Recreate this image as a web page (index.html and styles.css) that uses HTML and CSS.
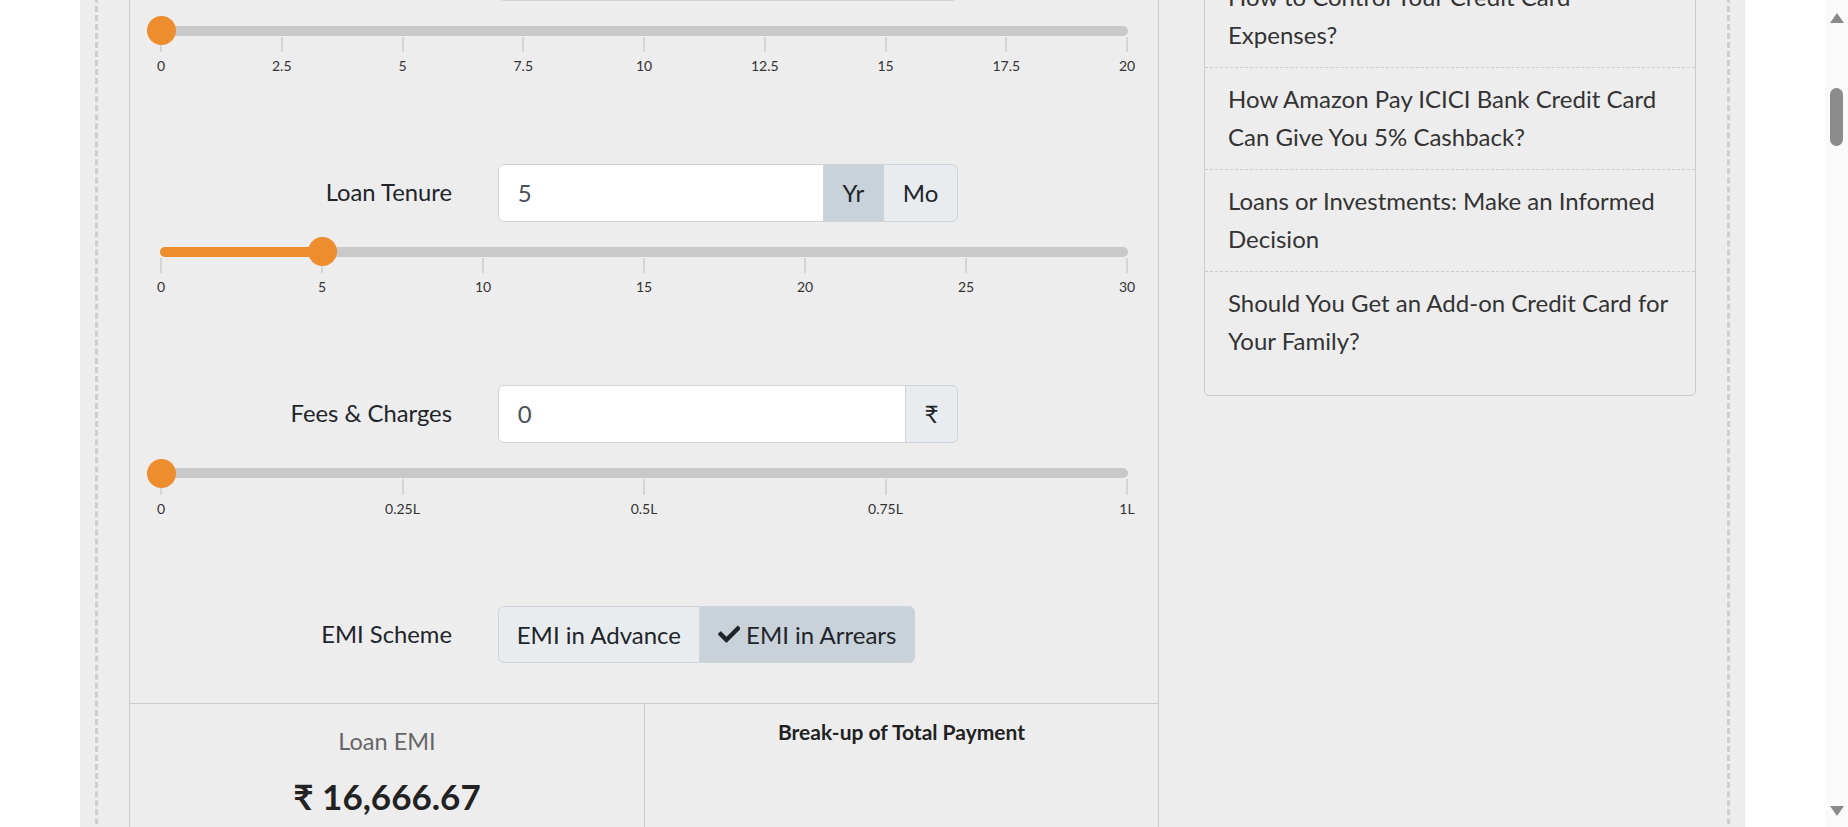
FILE: index.html
```html
<!DOCTYPE html>
<html lang="en">
<head>
<meta charset="utf-8">
<title>Home Loan EMI Calculator</title>
<link rel="stylesheet" href="styles.css">
</head>
<body>
<div class="viewport">
  <div class="page">
    <div class="frame">
      <main class="calc">
        <div class="form">

          <section class="form-row">
            <div class="field">
              <label class="field-label">Home Loan Amount</label>
              <div class="input-group">
                <span class="input">10,00,000</span>
                <span class="addon">₹</span>
              </div>
            </div>
            <div class="slider">
              <div class="track">
                <div class="rail">
                  <div class="fill" style="width:5%"></div>
                  <div class="thumb" style="left:5%"></div>
                </div>
              </div>
              <div class="ticks">
                <div class="tick"><span class="mark"></span><span class="tick-label">0</span></div>
                <div class="tick"><span class="mark"></span><span class="tick-label">25L</span></div>
                <div class="tick"><span class="mark"></span><span class="tick-label">50L</span></div>
                <div class="tick"><span class="mark"></span><span class="tick-label">75L</span></div>
                <div class="tick"><span class="mark"></span><span class="tick-label">100L</span></div>
                <div class="tick"><span class="mark"></span><span class="tick-label">125L</span></div>
                <div class="tick"><span class="mark"></span><span class="tick-label">150L</span></div>
                <div class="tick"><span class="mark"></span><span class="tick-label">175L</span></div>
                <div class="tick"><span class="mark"></span><span class="tick-label">200L</span></div>
              </div>
            </div>
          </section>

          <section class="form-row">
            <div class="field">
              <label class="field-label">Interest Rate</label>
              <div class="input-group">
                <span class="input">0</span>
                <span class="addon">%</span>
              </div>
            </div>
            <div class="slider">
              <div class="track">
                <div class="rail">
                  <div class="fill" style="width:0%"></div>
                  <div class="thumb" style="left:0%"></div>
                </div>
              </div>
              <div class="ticks">
                <div class="tick"><span class="mark"></span><span class="tick-label">0</span></div>
                <div class="tick"><span class="mark"></span><span class="tick-label">2.5</span></div>
                <div class="tick"><span class="mark"></span><span class="tick-label">5</span></div>
                <div class="tick"><span class="mark"></span><span class="tick-label">7.5</span></div>
                <div class="tick"><span class="mark"></span><span class="tick-label">10</span></div>
                <div class="tick"><span class="mark"></span><span class="tick-label">12.5</span></div>
                <div class="tick"><span class="mark"></span><span class="tick-label">15</span></div>
                <div class="tick"><span class="mark"></span><span class="tick-label">17.5</span></div>
                <div class="tick"><span class="mark"></span><span class="tick-label">20</span></div>
              </div>
            </div>
          </section>

          <section class="form-row">
            <div class="field">
              <label class="field-label">Loan Tenure</label>
              <div class="input-group">
                <span class="input">5</span>
                <span class="addon active">Yr</span>
                <span class="addon">Mo</span>
              </div>
            </div>
            <div class="slider">
              <div class="track">
                <div class="rail">
                  <div class="fill" style="width:16.667%"></div>
                  <div class="thumb" style="left:16.667%"></div>
                </div>
              </div>
              <div class="ticks">
                <div class="tick"><span class="mark"></span><span class="tick-label">0</span></div>
                <div class="tick"><span class="mark"></span><span class="tick-label">5</span></div>
                <div class="tick"><span class="mark"></span><span class="tick-label">10</span></div>
                <div class="tick"><span class="mark"></span><span class="tick-label">15</span></div>
                <div class="tick"><span class="mark"></span><span class="tick-label">20</span></div>
                <div class="tick"><span class="mark"></span><span class="tick-label">25</span></div>
                <div class="tick"><span class="mark"></span><span class="tick-label">30</span></div>
              </div>
            </div>
          </section>

          <section class="form-row">
            <div class="field">
              <label class="field-label">Fees &amp; Charges</label>
              <div class="input-group">
                <span class="input">0</span>
                <span class="addon">₹</span>
              </div>
            </div>
            <div class="slider">
              <div class="track">
                <div class="rail">
                  <div class="fill" style="width:0%"></div>
                  <div class="thumb" style="left:0%"></div>
                </div>
              </div>
              <div class="ticks">
                <div class="tick"><span class="mark"></span><span class="tick-label">0</span></div>
                <div class="tick"><span class="mark"></span><span class="tick-label">0.25L</span></div>
                <div class="tick"><span class="mark"></span><span class="tick-label">0.5L</span></div>
                <div class="tick"><span class="mark"></span><span class="tick-label">0.75L</span></div>
                <div class="tick"><span class="mark"></span><span class="tick-label">1L</span></div>
              </div>
            </div>
          </section>

          <section class="form-row last">
            <div class="field">
              <label class="field-label">EMI Scheme</label>
              <div class="btn-group">
                <span class="btn">EMI in Advance</span>
                <span class="btn active"><svg class="check" viewBox="0 0 512 512" aria-hidden="true"><path d="M173.9 439.4l-166.4-166.4c-10-10-10-26.2 0-36.2l36.2-36.2c10-10 26.2-10 36.2 0L192 312.7 432.1 72.6c10-10 26.2-10 36.2 0l36.2 36.2c10 10 10 26.2 0 36.2l-294.4 294.4c-10 10-26.2 10-36.2 0z"/></svg>EMI in Arrears</span>
              </div>
            </div>
          </section>
        </div>

        <div class="results">
          <div class="result-emi">
            <div class="result-title">Loan EMI</div>
            <div class="result-value">₹ 16,666.67</div>
          </div>
          <div class="result-chart">
            <div class="chart-title">Break-up of Total Payment</div>
          </div>
        </div>
      </main>

      <aside class="sidebar">
        <ul class="articles">
          <li class="article">How to Control Your Credit Card Expenses?</li>
          <li class="article">How Amazon Pay ICICI Bank Credit Card Can Give You 5% Cashback?</li>
          <li class="article">Loans or Investments: Make an Informed Decision</li>
          <li class="article">Should You Get an Add-on Credit Card for Your Family?</li>
        </ul>
      </aside>
    </div>
  </div>
</div>
<div class="scrollbar" aria-hidden="true">
  <span class="arrow up"></span>
  <span class="sb-thumb"></span>
  <span class="arrow down"></span>
</div>
</body>
</html>
```

FILE: styles.css
```css
* { box-sizing: border-box; }

html, body {
  margin: 0;
  height: 100%;
}

body {
  display: flex;
  overflow: hidden;
  background: #ffffff;
  font-family: Lato, "Liberation Sans", sans-serif;
  color: #212529;
}

.viewport {
  flex: 1;
  height: 827px;
  overflow: hidden;
}

.page {
  width: 1665px;
  margin: -310px auto 0;
  padding: 0 15px;
  background: #ededed;
  min-height: 1400px;
}

.frame {
  border-left: 3px dashed #cfcfcf;
  border-right: 3px dashed #cfcfcf;
  padding: 0 31px;
  min-height: 1400px;
  display: grid;
  grid-template-columns: 1030px 492px;
  column-gap: 45px;
  align-items: start;
}

/* ---------- calculator ---------- */
.calc {
  border: 1px solid #cccccc;
  border-top-left-radius: 4px;
  border-top-right-radius: 4px;
}

.form {
  padding-top: 30px;
}

.form-row {
  padding-bottom: 89.5px;
}

.form-row.last {
  padding-bottom: 40px;
}

.field {
  display: grid;
  grid-template-columns: 322px 460px;
  column-gap: 46px;
  align-items: center;
}

.field-label {
  text-align: right;
  font-size: 23.8px;
  line-height: 37.5px;
  color: #212529;
}

.input-group {
  display: flex;
  height: 58.25px;
}

.input {
  flex: 1;
  background: #ffffff;
  border: 1px solid #ced4da;
  border-radius: 6px 0 0 6px;
  padding: 9.375px 18.75px;
  font-size: 24px;
  line-height: 37.5px;
  color: #495057;
}

.addon {
  display: flex;
  align-items: center;
  margin-left: -1px;
  padding: 0 18.75px;
  background: #e9ecef;
  border: 1px solid #ced4da;
  font-size: 24px;
  color: #212529;
}

.addon:last-child {
  border-radius: 0 6px 6px 0;
}

.addon.active {
  background: #cad2d9;
}

/* ---------- slider ---------- */
.slider {
  margin-top: 25px;
}

.track {
  position: relative;
  height: 10px;
  margin: 0 30px;
  background: #c9c9c9;
  border-radius: 5px;
}

.rail {
  position: absolute;
  left: 1px;
  right: 1px;
  top: 0;
  bottom: 0;
}

.fill {
  position: absolute;
  left: -1px;
  top: 0;
  bottom: 0;
  background: #ee8d2d;
  border-radius: 5px 0 0 5px;
}

.thumb {
  position: absolute;
  top: -9.5px;
  width: 29px;
  height: 29px;
  margin-left: -14.5px;
  border-radius: 50%;
  background: #ee8d2d;
}

.ticks {
  display: flex;
  justify-content: space-between;
  margin: 1px 31px 0;
}

.tick {
  width: 0;
  display: flex;
  flex-direction: column;
  align-items: center;
}

.mark {
  display: block;
  width: 2px;
  height: 15.5px;
  background: #d5d5d5;
}

.tick-label {
  margin-top: 5px;
  font-size: 14px;
  line-height: 17px;
  color: #333333;
  white-space: nowrap;
}

/* ---------- EMI scheme ---------- */
.btn-group {
  display: flex;
  justify-self: start;
  height: 57.3px;
}

.btn {
  display: flex;
  align-items: center;
  padding: 0 17.75px;
  background: #e9ecef;
  border: 1px solid #ced4da;
  font-size: 24px;
  color: #212529;
  white-space: nowrap;
}

.btn:first-child {
  border-radius: 6px 0 0 6px;
}

.btn:last-child {
  margin-left: -1px;
  border-radius: 0 6px 6px 0;
}

.btn.active {
  background: #cad2d9;
}

.check {
  width: 22.5px;
  height: 22.5px;
  margin-right: 6px;
  fill: #212529;
}

/* ---------- results ---------- */
.results {
  display: grid;
  grid-template-columns: 1fr 1fr;
  border-top: 1px solid #cccccc;
  min-height: 400px;
}

.result-emi {
  text-align: center;
  padding-top: 21px;
}

.result-title {
  font-size: 23.5px;
  line-height: 33px;
  color: #666666;
}

.result-value {
  margin-top: 17px;
  font-size: 35px;
  line-height: 42px;
  font-weight: 700;
  color: #222222;
}

.result-chart {
  border-left: 1px solid #cccccc;
  text-align: center;
  padding-top: 11.5px;
}

.chart-title {
  font-size: 21px;
  line-height: 31.5px;
  font-weight: 700;
  color: #222222;
}

/* ---------- sidebar ---------- */
.sidebar {
  margin-top: 274.5px;
}

.articles {
  list-style: none;
  margin: 0;
  padding: 0 0 22px;
  border: 1px solid #cccccc;
  border-radius: 5px;
}

.article {
  padding: 12.5px 23px 13.5px;
  font-size: 24px;
  line-height: 37.5px;
  color: #333333;
}

.article + .article {
  border-top: 1px dashed #cccccc;
}

/* ---------- scrollbar ---------- */
.scrollbar {
  width: 23px;
  height: 827px;
  background: #fafafa;
  display: flex;
  flex-direction: column;
  align-items: center;
  flex-shrink: 0;
}

.arrow {
  display: block;
  width: 0;
  height: 0;
  border-left: 7px solid transparent;
  border-right: 7px solid transparent;
}

.arrow.up {
  margin-top: 13px;
  border-bottom: 10px solid #8a8a8a;
}

.arrow.down {
  margin-top: auto;
  margin-bottom: 11px;
  border-top: 10px solid #8a8a8a;
}

.sb-thumb {
  display: block;
  width: 13px;
  height: 58px;
  margin-top: 65px;
  border-radius: 6.5px;
  background: #8c8c8c;
}
```
